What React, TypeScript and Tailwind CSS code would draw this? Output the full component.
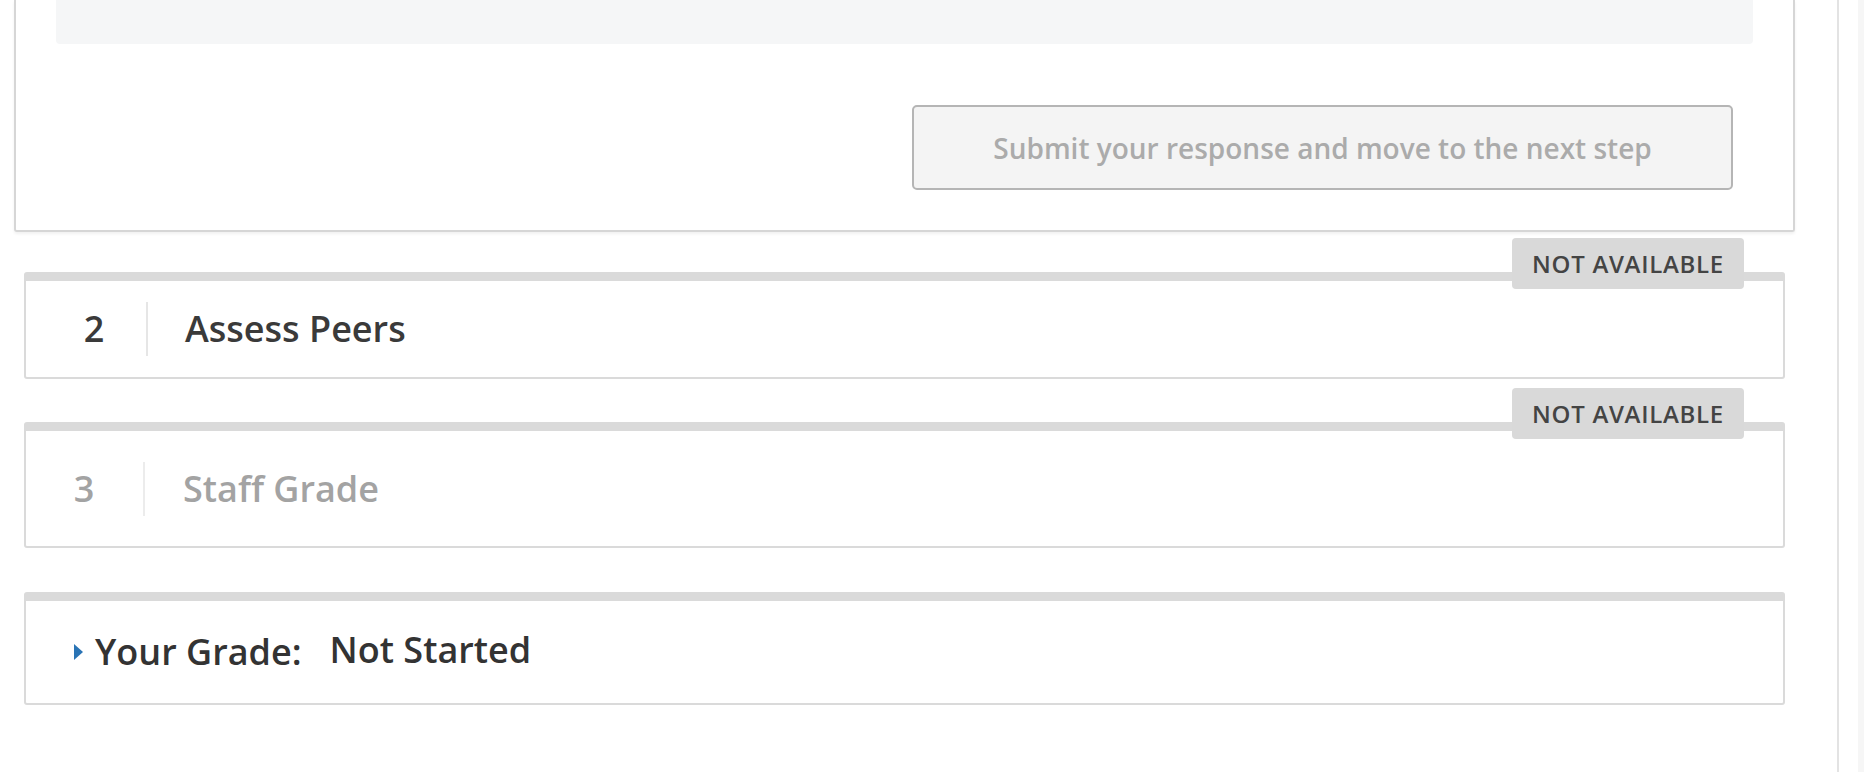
import React from "react";

const font = { fontFamily: '"Open Sans", "Liberation Sans", sans-serif' };

function Badge() {
  return (
    <div className="absolute top-0 right-[41px] h-[51px] w-[232px] rounded-[4px] bg-[#d9d9d9] flex items-center justify-center">
      <span className="text-[24px] font-semibold tracking-[0.7px] text-[#444]">NOT AVAILABLE</span>
    </div>
  );
}

export default function App() {
  return (
    <div className="flex h-screen w-screen overflow-hidden bg-white" style={font}>
      <div className="w-[1837px] shrink-0 pl-[14px] pr-[42px]">
        {/* response step, scrolled partly out of view */}
        <div className="border-2 border-t-0 border-[#d6d6d6] rounded-b-[3px] bg-white shadow-[0_2px_3px_rgba(0,0,0,0.06)] px-[40px] pb-[40px]">
          <div className="h-[44px] rounded-b-[4px] bg-[#f5f6f7]" />
          <div className="flex justify-end pt-[61px] pr-[20px]">
            <button className="h-[85px] w-[821px] rounded-[5px] border-2 border-[#b5b5b5] bg-[#f4f4f4] text-[28px] font-semibold text-[#ababab]">
              Submit your response and move to the next step
            </button>
          </div>
        </div>

        <div className="px-[10px]">
          {/* step 2 */}
          <div className="relative mt-[6px] pt-[34px]">
            <Badge />
            <div className="rounded-[3px] border-2 border-t-[9px] border-[#dadada] bg-white">
              <div className="flex h-[96px] items-center pl-[48px] text-[36px] font-semibold text-[#3a3a3a]">
                <span className="w-[40px] text-center">2</span>
                <span className="ml-[32px] h-[54px] w-[2px] bg-[#e6e6e6]" />
                <span className="ml-[37px]">Assess Peers</span>
              </div>
            </div>
          </div>

          {/* step 3 */}
          <div className="relative mt-[9px] pt-[34px]">
            <Badge />
            <div className="rounded-[3px] border-2 border-t-[9px] border-[#dadada] bg-white">
              <div className="flex h-[115px] items-center pl-[38px] text-[36px] font-semibold text-[#a3a3a3]">
                <span className="w-[40px] text-center">3</span>
                <span className="ml-[39px] h-[54px] w-[2px] bg-[#ececec]" />
                <span className="ml-[38px]">Staff Grade</span>
              </div>
            </div>
          </div>

          {/* grade */}
          <div className="mt-[44px] rounded-[3px] border-2 border-t-[9px] border-[#dadada] bg-white">
            <div className="flex h-[102px] items-center pl-[48px] text-[36px] font-semibold text-[#333]">
              <svg width="9" height="16" viewBox="0 0 9 16" className="mr-[12px]">
                <path d="M0 0 L9 8 L0 16 Z" fill="#2a74b5" />
              </svg>
              <span>Your Grade:</span>
              <span className="ml-[28px] -translate-y-[2px]">Not Started</span>
            </div>
          </div>
        </div>
      </div>

      {/* scrollbar track */}
      <div className="flex w-[27px] shrink-0 border-l-2 border-[#e3e3e3]">
        <div className="flex-1" />
        <div className="w-[6px] bg-[#f6f6f6]" />
      </div>
    </div>
  );
}
